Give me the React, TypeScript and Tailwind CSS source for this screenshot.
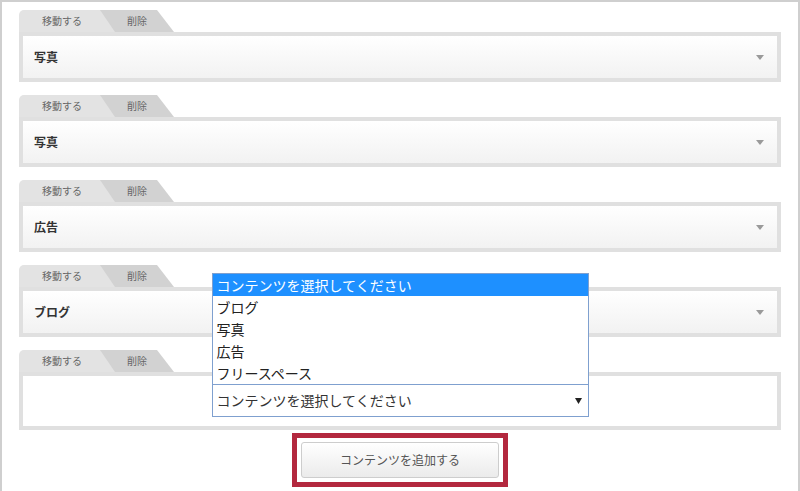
import React from "react";

const font = { fontFamily: '"Noto Sans CJK JP", "Noto Sans", sans-serif' };

function Tabs() {
  return (
    <div className="flex h-[22px] text-[10px] text-[#666] leading-none">
      <div className="relative z-10 w-[96px] rounded-tl-[5px] bg-[#e3e3e3] [clip-path:polygon(0_0,81px_0,96px_100%,0_100%)] flex items-center">
        <span className="w-[86px] text-center">移動する</span>
      </div>
      <div className="-ml-[15px] w-[74px] bg-[#d2d2d2] [clip-path:polygon(0_0,57px_0,74px_100%,0_100%)] flex items-center">
        <span className="w-[74px] text-center">削除</span>
      </div>
    </div>
  );
}

function Arrow() {
  return (
    <svg width="8" height="5" viewBox="0 0 8 5">
      <path d="M0 0 L8 0 L4 5 Z" fill="#9a9a9a" />
    </svg>
  );
}

function Block({ label }: { label: string }) {
  return (
    <div className="mb-[13px]">
      <Tabs />
      <div className="bg-[#e0e0e0] p-[4px]">
        <div className="h-[42px] bg-gradient-to-b from-white to-[#f2f2f2] flex items-center justify-between pl-[11px] pr-[13px]">
          <span className="text-[12px] font-bold text-[#333]">{label}</span>
          <Arrow />
        </div>
      </div>
    </div>
  );
}

export default function App() {
  const options = ["コンテンツを選択してください", "ブログ", "写真", "広告", "フリースペース"];
  return (
    <div
      style={font}
      className="w-[800px] h-[491px] overflow-hidden bg-white border-x-2 border-t-2 border-[#cfcfcf] pt-[8px] px-[17px]"
    >
      <Block label="写真" />
      <Block label="写真" />
      <Block label="広告" />
      <Block label="ブログ" />
      <div>
        <Tabs />
        <div className="bg-[#e0e0e0] p-[4px]">
          <div className="h-[50px] bg-white flex justify-center pt-[8px]">
            <div className="relative w-[377px] h-[33px] border border-[#7fa0cf] bg-white flex items-center justify-between pl-[4px] pr-[6px]">
              <span className="text-[14px] text-[#333]">コンテンツを選択してください</span>
              <svg width="7" height="6" viewBox="0 0 7 6">
                <path d="M0 0 L7 0 L3.5 6 Z" fill="#222" />
              </svg>
              <div className="absolute -left-[1px] bottom-full w-[377px] border border-[#7fa0cf] bg-white z-20">
                {options.map((o, i) => (
                  <div
                    key={o}
                    className={
                      i === 0
                        ? "h-[22px] flex items-center pl-[4px] text-[14px] bg-[#1e90ff] text-white"
                        : "h-[22px] flex items-center pl-[4px] text-[14px] text-[#222]"
                    }
                  >
                    {o}
                  </div>
                ))}
              </div>
            </div>
          </div>
        </div>
      </div>
      <div className="flex justify-center mt-[3px]">
        <div className="w-[216px] h-[54px] border-[5px] border-[#b3283e] p-[4px] bg-white">
          <div className="h-full rounded-[3px] border border-[#cdcdcd] bg-gradient-to-b from-white to-[#ebebeb] flex items-center justify-center text-[12px] text-[#555]">
            コンテンツを追加する
          </div>
        </div>
      </div>
    </div>
  );
}
